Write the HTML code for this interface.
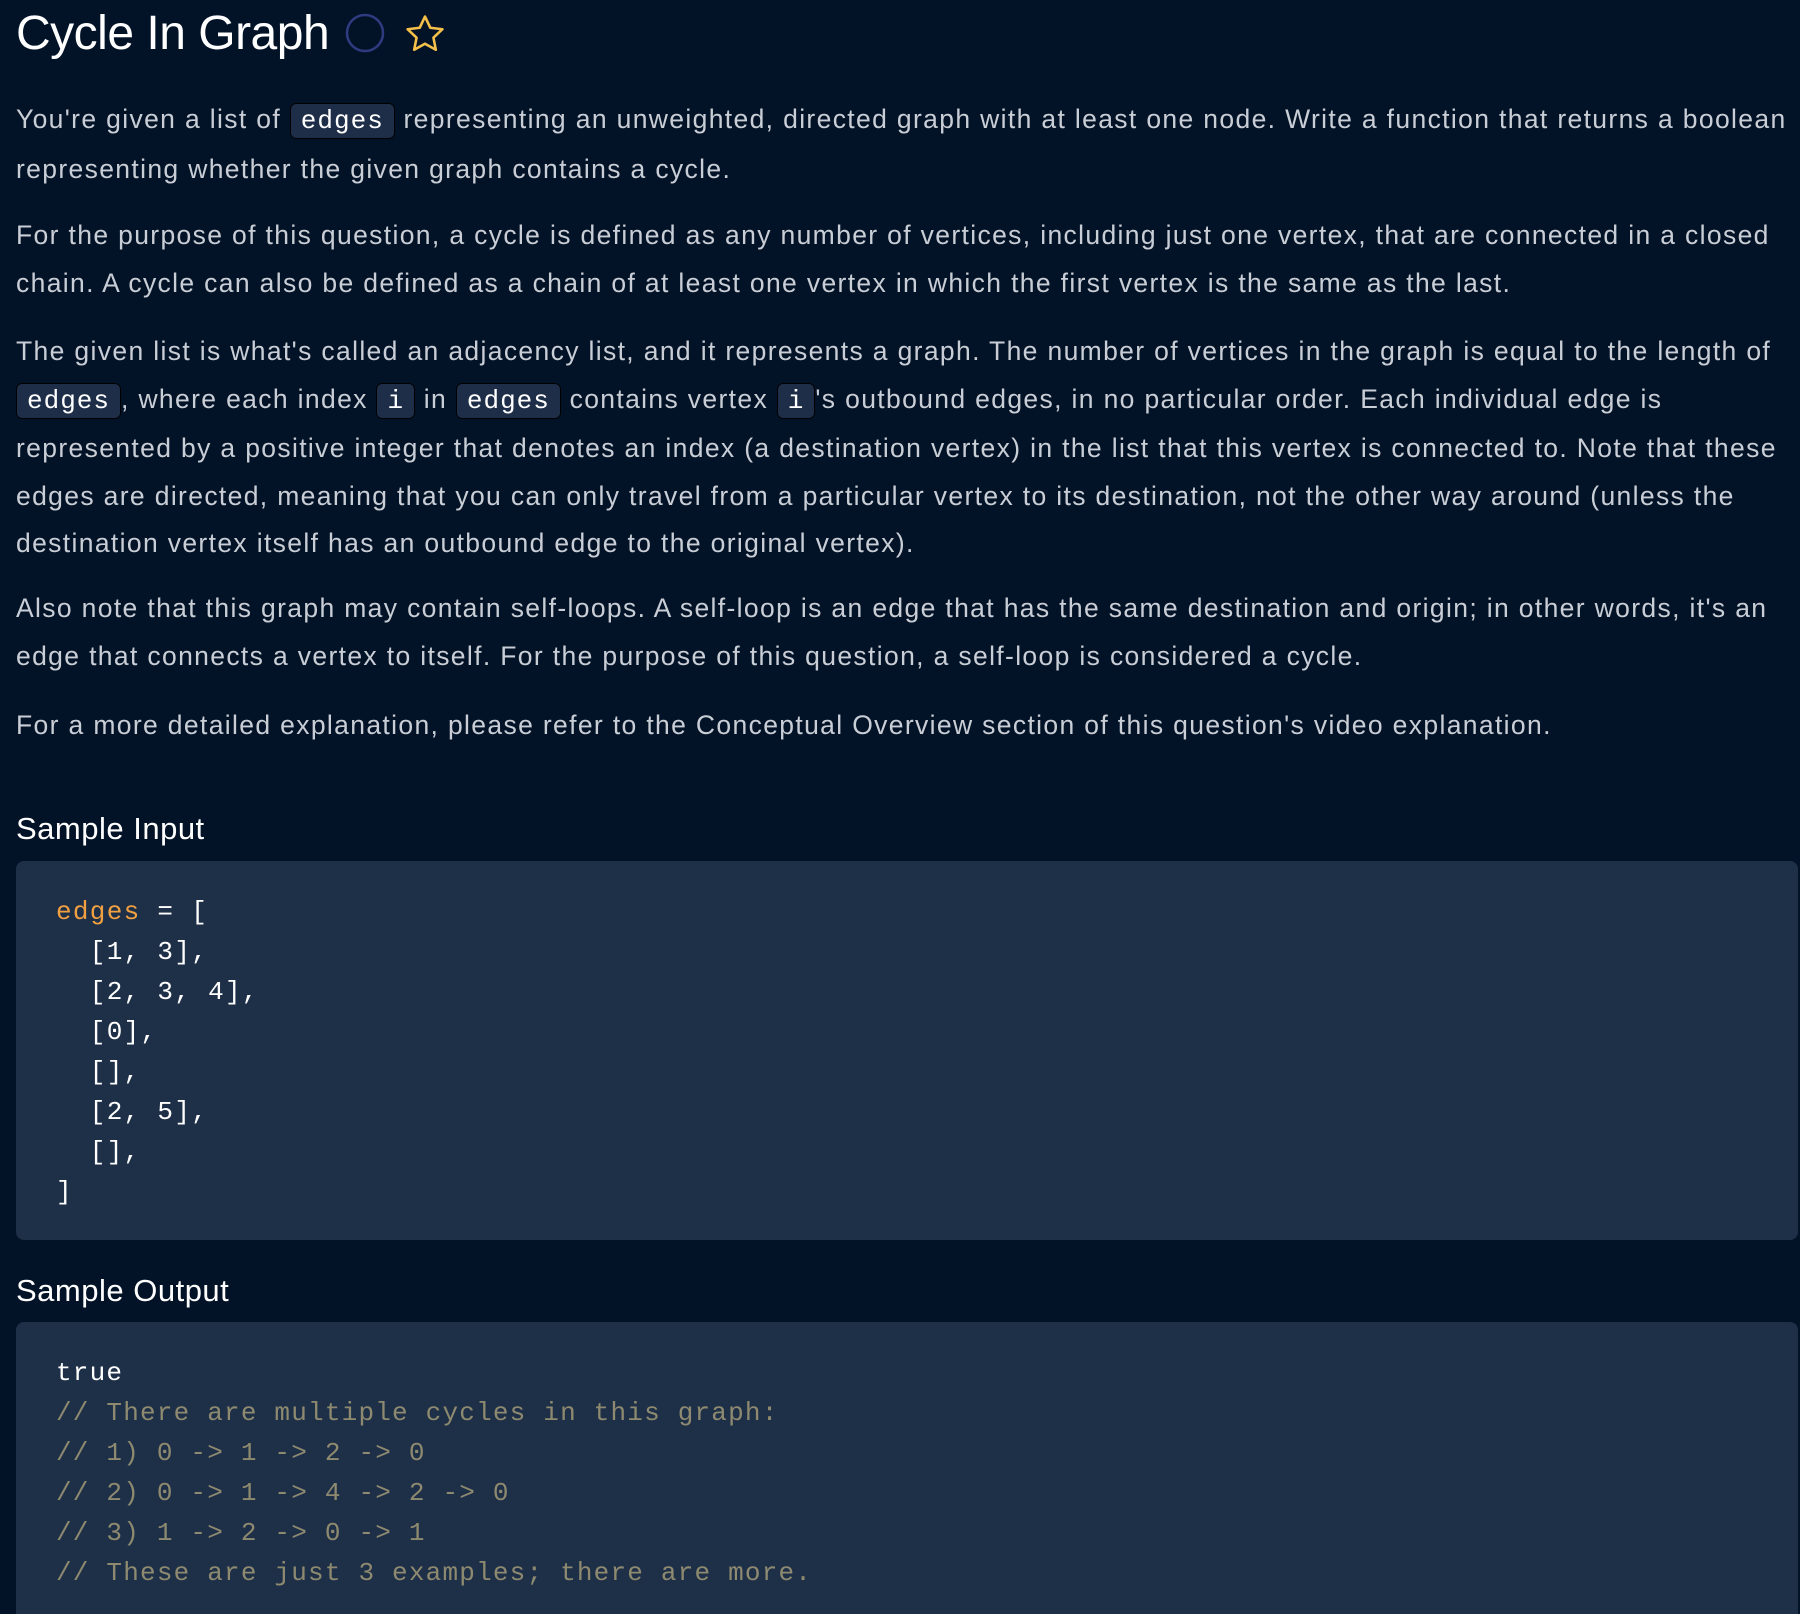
<!DOCTYPE html>
<html><head><meta charset="utf-8"><style>
html,body{margin:0;padding:0;background:#031327;width:1800px;height:1614px;overflow:hidden}
body{font-family:"Liberation Sans",sans-serif;color:#c9ced6;position:relative}
h1{position:absolute;left:16px;top:6px;margin:0;font-size:48px;font-weight:normal;color:#fff;letter-spacing:-0.5px}
p{position:absolute;left:16px;margin:0;font-size:26.5px;line-height:47.5px;white-space:nowrap;letter-spacing:1.35px}
code{font-family:"Liberation Mono",monospace;background:#1e2e48;color:#fff;border:1.5px solid #000;border-radius:6px;padding:2px 10px;font-size:26px;letter-spacing:1px}
h2{position:absolute;left:16px;margin:0;font-size:31px;font-weight:normal;color:#fff;letter-spacing:0.5px}
.box{position:absolute;left:16px;width:1782px;background:#1e2f48;border-radius:8px}
pre{margin:0;position:absolute;left:40px;font-family:"Liberation Mono",monospace;font-size:26px;line-height:40px;letter-spacing:1.3px;color:#fff}
.o{color:#f0a040}.c{color:#8e8a70}
</style></head><body>
<h1>Cycle In Graph</h1>
<svg style="position:absolute;left:344px;top:12px" width="42" height="42"><circle cx="21" cy="21" r="18" fill="none" stroke="#2e3b80" stroke-width="2.5"/></svg>
<svg style="position:absolute;left:402px;top:12px" width="46" height="44" viewBox="0 0 24 24"><path d="M12 2.5l2.9 6.1 6.6.8-4.9 4.6 1.3 6.6L12 17.3l-5.9 3.3 1.3-6.6-4.9-4.6 6.6-.8z" fill="none" stroke="#f5c04a" stroke-width="1.4" stroke-linejoin="round"/></svg>
<p style="top:96px">You're given a list of <code>edges</code> representing an unweighted, directed graph with at least one node. Write a function that returns a boolean<br>representing whether the given graph contains a cycle.</p>
<p style="top:212px">For the purpose of this question, a cycle is defined as any number of vertices, including just one vertex, that are connected in a closed<br>chain. A cycle can also be defined as a chain of at least one vertex in which the first vertex is the same as the last.</p>
<p style="top:328px">The given list is what's called an adjacency list, and it represents a graph. The number of vertices in the graph is equal to the length of<br><code>edges</code>, where each index <code>i</code> in <code>edges</code> contains vertex <code>i</code>'s outbound edges, in no particular order. Each individual edge is<br>represented by a positive integer that denotes an index (a destination vertex) in the list that this vertex is connected to. Note that these<br>edges are directed, meaning that you can only travel from a particular vertex to its destination, not the other way around (unless the<br>destination vertex itself has an outbound edge to the original vertex).</p>
<p style="top:585px">Also note that this graph may contain self-loops. A self-loop is an edge that has the same destination and origin; in other words, it's an<br>edge that connects a vertex to itself. For the purpose of this question, a self-loop is considered a cycle.</p>
<p style="top:702px">For a more detailed explanation, please refer to the Conceptual Overview section of this question's video explanation.</p>
<h2 style="top:811px">Sample Input</h2>
<div class="box" style="top:861px;height:379px"><pre style="top:31px"><span class="o">edges</span> = [
  [1, 3],
  [2, 3, 4],
  [0],
  [],
  [2, 5],
  [],
]</pre></div>
<h2 style="top:1273px">Sample Output</h2>
<div class="box" style="top:1322px;height:300px"><pre style="top:31px;letter-spacing:1.2px">true
<span class="c">// There are multiple cycles in this graph:
// 1) 0 -&gt; 1 -&gt; 2 -&gt; 0
// 2) 0 -&gt; 1 -&gt; 4 -&gt; 2 -&gt; 0
// 3) 1 -&gt; 2 -&gt; 0 -&gt; 1
// These are just 3 examples; there are more.</span></pre></div>
</body></html>
